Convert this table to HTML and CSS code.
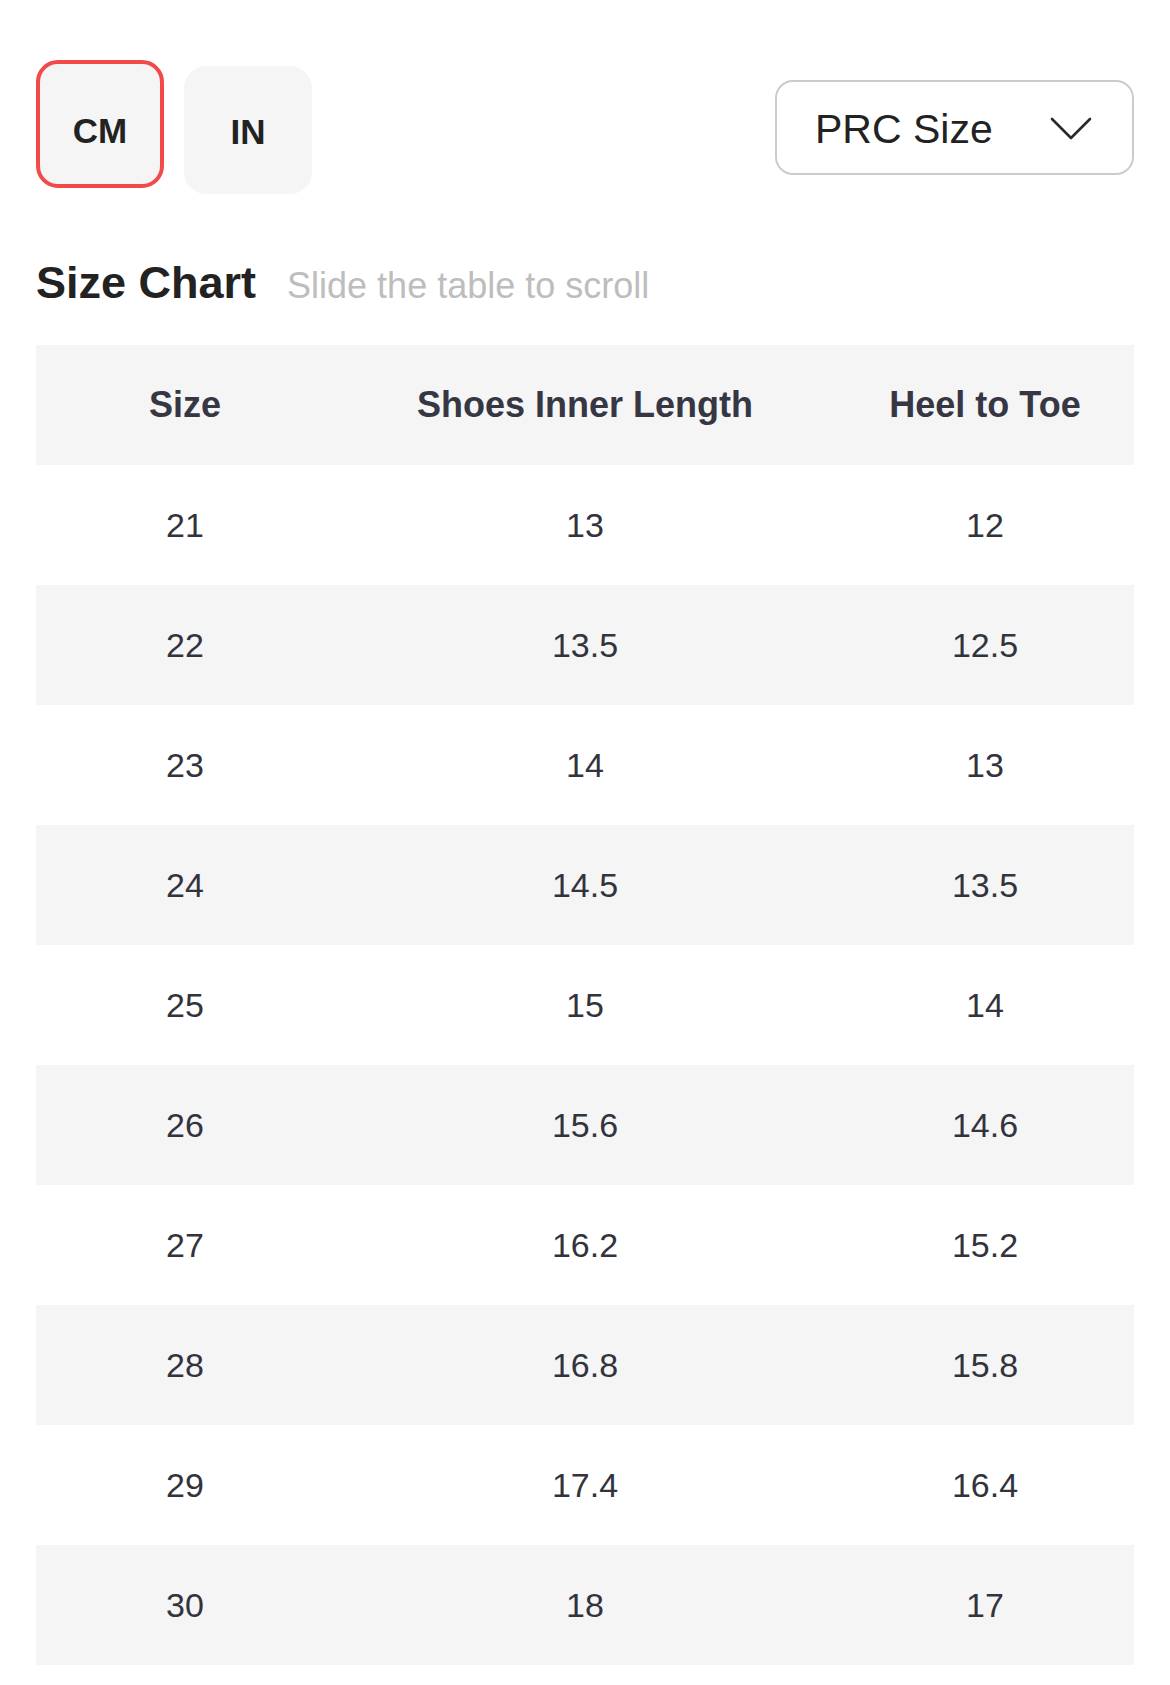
FILE: index.html
```html
<!DOCTYPE html>
<html lang="en">
<head>
<meta charset="utf-8">
<title>Size Chart</title>
<link rel="stylesheet" href="styles.css">
</head>
<body>
<div class="page">
  <div class="top-row">
    <div class="units">
      <div class="unit unit-active"><span class="unit-text">CM</span></div>
      <div class="unit unit-idle"><span class="unit-text">IN</span></div>
    </div>
    <div class="select">
      <span class="select-label">PRC Size</span>
      <svg class="chevron" width="42" height="24" viewBox="0 0 42 24"><polyline points="2,2 21,21 40,2" fill="none" stroke="#2a2a2a" stroke-width="2.6" stroke-linecap="round" stroke-linejoin="round"/></svg>
    </div>
  </div>

  <div class="heading">
    <h2 class="title">Size Chart</h2>
    <span class="hint">Slide the table to scroll</span>
  </div>

  <div class="table">
    <div class="row row-head"><div class="cell">Size</div><div class="cell">Shoes Inner Length</div><div class="cell">Heel to Toe</div></div>
    <div class="row"><div class="cell">21</div><div class="cell">13</div><div class="cell">12</div></div>
    <div class="row row-alt"><div class="cell">22</div><div class="cell">13.5</div><div class="cell">12.5</div></div>
    <div class="row"><div class="cell">23</div><div class="cell">14</div><div class="cell">13</div></div>
    <div class="row row-alt"><div class="cell">24</div><div class="cell">14.5</div><div class="cell">13.5</div></div>
    <div class="row"><div class="cell">25</div><div class="cell">15</div><div class="cell">14</div></div>
    <div class="row row-alt"><div class="cell">26</div><div class="cell">15.6</div><div class="cell">14.6</div></div>
    <div class="row"><div class="cell">27</div><div class="cell">16.2</div><div class="cell">15.2</div></div>
    <div class="row row-alt"><div class="cell">28</div><div class="cell">16.8</div><div class="cell">15.8</div></div>
    <div class="row"><div class="cell">29</div><div class="cell">17.4</div><div class="cell">16.4</div></div>
    <div class="row row-alt"><div class="cell">30</div><div class="cell">18</div><div class="cell">17</div></div>
  </div>
</div>
</body>
</html>
```

FILE: styles.css
```css
html, body {
  margin: 0;
  padding: 0;
  background: #ffffff;
}
body {
  font-family: "Liberation Sans", Arial, sans-serif;
  color: #222222;
}
.page {
  padding: 60px 36px 20px 36px;
}
.top-row {
  display: flex;
  justify-content: space-between;
  align-items: flex-start;
}
.units {
  display: flex;
  align-items: flex-start;
  gap: 20px;
}
.unit {
  box-sizing: border-box;
  width: 128px;
  height: 128px;
  border-radius: 22px;
  background: #f5f5f6;
  display: flex;
  align-items: center;
  justify-content: center;
  font-weight: 700;
  font-size: 35px;
  line-height: 1;
  color: #222222;
}
.unit-active {
  border: 4px solid #f24a4a;
}
.unit-active .unit-text {
  margin-top: 12px;
}
.unit-idle {
  margin-top: 6px;
}
.unit-idle .unit-text {
  margin-top: 2px;
}
.select {
  box-sizing: border-box;
  margin-top: 20px;
  width: 359px;
  height: 95px;
  border: 2.5px solid #cccccc;
  border-radius: 18px;
  display: flex;
  align-items: center;
  justify-content: space-between;
  padding: 0 40px 0 38px;
}
.select-label {
  font-size: 41px;
  line-height: 1;
  color: #222222;
  margin-top: 4px;
}
.chevron {
  display: block;
  margin-top: 2px;
}
.heading {
  display: flex;
  align-items: baseline;
  gap: 31px;
  margin-top: 66px;
}
.title {
  margin: 0;
  font-size: 45px;
  font-weight: 700;
  line-height: 1;
  color: #222222;
}
.hint {
  font-size: 36px;
  line-height: 1;
  color: #bdbdbd;
}
.table {
  margin-top: 40px;
}
.row {
  display: grid;
  grid-template-columns: 298px 502px 298px;
  height: 120px;
  align-items: center;
  background: #ffffff;
}
.row-alt, .row-head {
  background: #f5f5f6;
}
.cell {
  text-align: center;
  font-size: 34px;
  line-height: 1;
  color: #33333d;
}
.row-head .cell {
  font-weight: 700;
  font-size: 36px;
  color: #363743;
}
```
